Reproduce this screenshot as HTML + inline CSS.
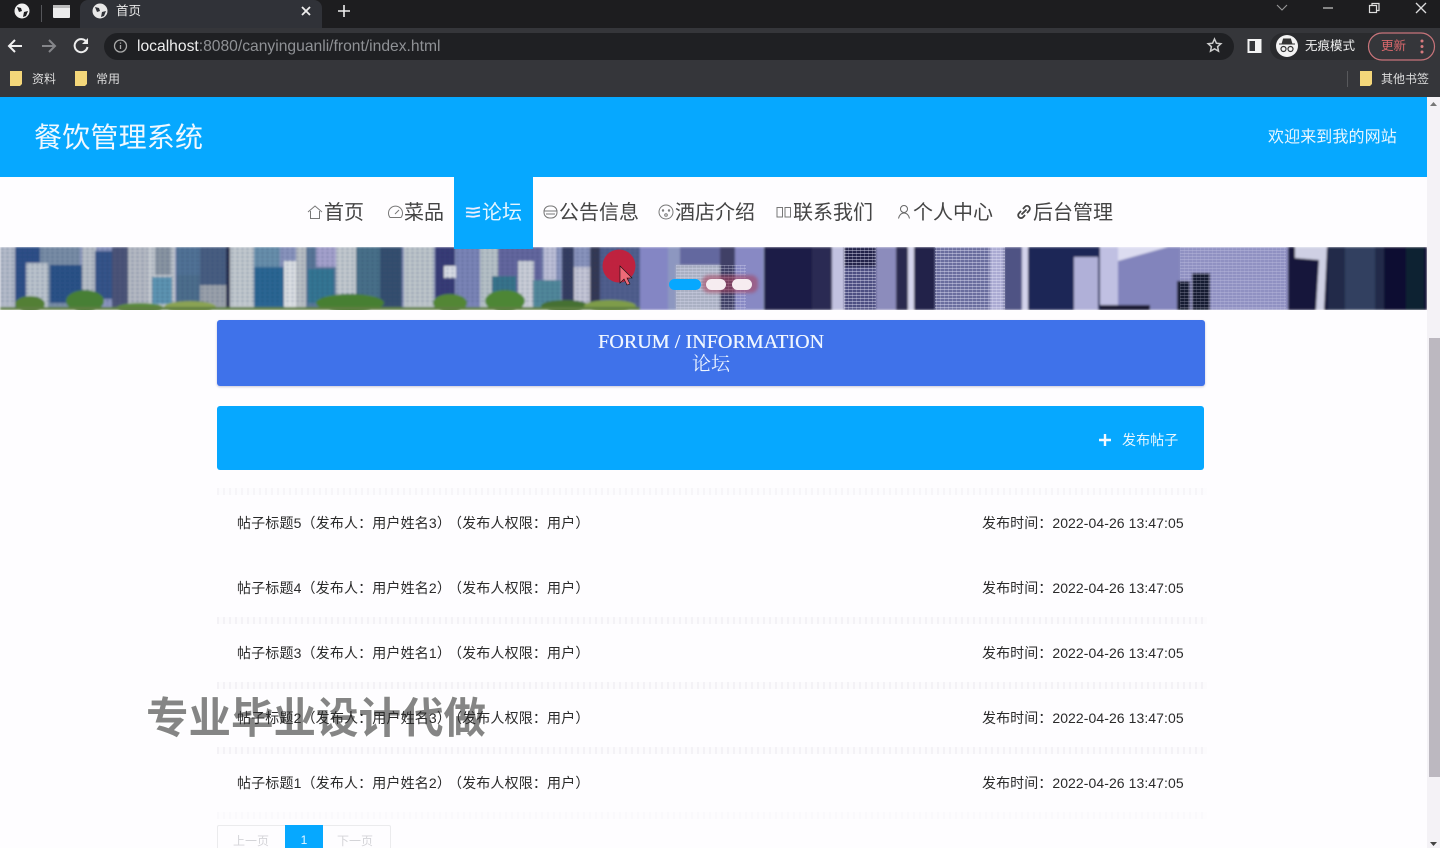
<!DOCTYPE html>
<html lang="zh"><head><meta charset="utf-8"><title>首页</title>
<style>
*{box-sizing:border-box;margin:0;padding:0}
html,body{width:1440px;height:848px;overflow:hidden;background:#fefdff}
body{position:relative;font-family:"Liberation Sans","Noto Sans CJK SC",sans-serif;color:#222}
.a{position:absolute;white-space:nowrap}
.nav{position:absolute;top:198px;font-size:20px;line-height:30px;color:#444;white-space:nowrap}
.nav svg{position:absolute;top:6px;left:-17px}
.rowl,.rowr{position:absolute;font-size:14px;line-height:20px;color:#2a2a2a;white-space:nowrap}
.rowl{left:237px;letter-spacing:.15px}
.rowl span{margin-left:4px}
.rowr{left:982px;letter-spacing:.07px}
.dots{position:absolute;left:217px;width:990px;height:7px;background:repeating-linear-gradient(90deg,rgba(150,140,165,.10) 0 2px,rgba(150,140,165,.02) 2px 6px)}
</style></head><body>

<!-- browser chrome -->
<div class="a" style="left:0;top:0;width:1440px;height:28px;background:#1d1d1f"></div>
<div class="a" style="left:80px;top:0;width:242px;height:30px;background:#303238;border-radius:8px 8px 0 0"></div>
<div class="a" style="left:41px;top:5px;width:1px;height:17px;background:#55565a"></div>
<div class="a" style="left:0;top:28px;width:1440px;height:69px;background:#35363a"></div>
<div class="a" style="left:104px;top:33px;width:1130px;height:27px;border-radius:14px;background:#1f2023"></div>
<svg class="a" style="left:0;top:0" width="360" height="92" fill="none">
<circle cx="22" cy="11" r="7.500" fill="#f0f0f0"/><path d="M17 7l4 1 1 3-3 1zM24 12l4-1-2 5-3 1z" fill="#1d1d1f"/>
<rect x="53" y="5" width="17" height="13" rx="1" fill="#ececec"/><rect x="53" y="5" width="17" height="3" fill="#bbb"/>
<circle cx="100" cy="11" r="7.500" fill="#e8e8e8"/><path d="M95 7l4 1 1 3-3 1zM102 12l4-1-2 5-3 1z" fill="#303238"/>
<path d="M302 7l8 8M310 7l-8 8" stroke="#eee" stroke-width="1.800"/>
<path d="M344 5v12M338 11h12" stroke="#eee" stroke-width="1.600"/>
<path d="M22 46H10M15 40l-6 6 6 6" stroke="#f1f1f1" stroke-width="2"/>
<path d="M42 46h12M49 40l6 6-6 6" stroke="#85868a" stroke-width="2"/>
<path d="M86.500 42a6.500 6.500 0 1 0 1 5" stroke="#eee" stroke-width="2"/><path d="M88 38v6h-6z" fill="#eee"/>
<circle cx="120.500" cy="46" r="6" stroke="#aaa" stroke-width="1.300"/><path d="M120.500 45v4M120.500 42.500v1.200" stroke="#aaa" stroke-width="1.300"/>
<path d="M10 71h12v13l-2 2H10z" fill="#f4d77a"/><path d="M75 71h12v13l-2 2H75z" fill="#f4d77a"/>
</svg>
<div class="a" style="left:116px;top:3px;font-size:12.500px;line-height:16px;color:#e8e8e8">首页</div>
<div class="a" style="left:137px;top:38px;font-size:15.650px;line-height:18px;color:#8f9195"><span style="color:#eee">localhost</span>:8080/canyinguanli/front/index.html</div>
<div class="a" style="left:32px;top:72px;font-size:12px;line-height:15px;color:#ddd">资料</div>
<div class="a" style="left:96px;top:72px;font-size:12px;line-height:15px;color:#ddd">常用</div>
<svg class="a" style="left:1200px;top:0" width="240" height="92" fill="none">
<path d="M77 5l5 5 5-5" stroke="#999" stroke-width="1.100"/>
<path d="M123 8h10" stroke="#ccc" stroke-width="1.200"/>
<rect x="169.500" y="5.500" width="7" height="7" stroke="#ddd" stroke-width="1.200"/><path d="M172 5V3.500h7v7h-2" stroke="#ddd" stroke-width="1.200"/>
<path d="M216 3l10 10M226 3l-10 10" stroke="#ddd" stroke-width="1.300"/>
<path d="M14.500 39l1.900 4.200 4.500.5-3.300 3 .9 4.500-4-2.300-4 2.300.9-4.500-3.300-3 4.500-.5z" stroke="#ccc" stroke-width="1.500"/>
<rect x="48.500" y="40" width="12" height="12" stroke="#f4f4f4" stroke-width="2"/><rect x="55" y="40" width="6" height="12" fill="#f4f4f4"/>
<rect x="70" y="33" width="156" height="27" rx="13" fill="#2a2b2e"/>
<circle cx="87" cy="46" r="11" fill="#f3f3f3"/><path d="M79 44h16M82 44l1.500-5h7l1.500 5z" fill="#333" stroke="#333"/>
<circle cx="83.500" cy="49" r="2.500" stroke="#333" stroke-width="1.200"/><circle cx="90.500" cy="49" r="2.500" stroke="#333" stroke-width="1.200"/>
<rect x="168.500" y="33" width="66" height="27" rx="13.500" fill="#35363a" stroke="#c8747a" stroke-width="1.200"/>
<circle cx="222" cy="41" r="1.500" fill="#d87a7e"/><circle cx="222" cy="46.500" r="1.500" fill="#d87a7e"/><circle cx="222" cy="52" r="1.500" fill="#d87a7e"/>
<path d="M147.500 71v16" stroke="#58595c"/>
<path d="M160 71h12v13l-2 2h-10z" fill="#f4d77a"/>
</svg>
<div class="a" style="left:1305px;top:38px;font-size:12.500px;line-height:16px;color:#f0f0f0">无痕模式</div>
<div class="a" style="left:1381px;top:38px;font-size:12.500px;line-height:16px;color:#d9686c">更新</div>
<div class="a" style="left:1381px;top:72px;font-size:12px;line-height:15px;color:#ddd">其他书签</div>

<!-- header -->
<div class="a" style="left:0;top:97px;width:1427px;height:80px;background:#06a8ff"></div>
<div class="a" style="left:34px;top:119px;font-size:28px;line-height:38px;color:#f0f8ff;letter-spacing:.2px">餐饮管理系统</div>
<div class="a" style="left:1268px;top:127px;font-size:16px;line-height:22px;color:#eaf6ff;letter-spacing:.1px">欢迎来到我的网站</div>

<!-- nav -->
<div class="a" style="left:454px;top:177px;width:79px;height:72px;background:#06a8ff;z-index:2"></div>
<div class="nav" style="left:324px">首页<svg width="16" height="16" viewBox="0 0 16 16" fill="none" stroke="#777"><path d="M1 8l7-6 7 6M3.500 7v7.500h9V7"/></svg></div>
<div class="nav" style="left:404px">菜品<svg width="17" height="16" viewBox="0 0 17 16" fill="none" stroke="#777"><path d="M3 13.500a7 7 0 1 1 11 0zM8 10l4-4"/></svg></div>
<div class="nav" style="left:482px;color:#e3f5ff;z-index:3">论坛<svg width="16" height="16" viewBox="0 0 16 16" fill="none" stroke="#eef" stroke-width="1.800"><path d="M1 4.500c3-1 6 1 9 0l5-1M1 8.500c3-1 6 1 9 0l5-1M1 12.500c3-1 6 1 9 0l5-1"/></svg></div>
<div class="nav" style="left:559px">公告信息<svg width="15" height="16" viewBox="0 0 15 16" fill="none" stroke="#777" style="left:-16px"><rect x="1" y="2" width="13" height="12" rx="5.500"/><path d="M1 7h13M3 10h9"/></svg></div>
<div class="nav" style="left:675px">酒店介绍<svg width="16" height="16" viewBox="0 0 16 16" fill="none" stroke="#777"><circle cx="8" cy="8" r="7"/><circle cx="5" cy="6.500" r=".7"/><circle cx="11" cy="6.500" r=".7"/><circle cx="8" cy="11" r="1.300"/></svg></div>
<div class="nav" style="left:793px">联系我们<svg width="16" height="16" viewBox="0 0 16 16" fill="none" stroke="#777"><rect x="1" y="3.500" width="5.500" height="9.500"/><rect x="9" y="3.500" width="5.500" height="9.500"/></svg></div>
<div class="nav" style="left:913px">个人中心<svg width="16" height="16" viewBox="0 0 16 16" fill="none" stroke="#666"><circle cx="8" cy="5" r="3.500"/><path d="M2.500 14.500c1-4 3-5.500 5.500-5.500s4.500 1.500 5.500 5.500"/></svg></div>
<div class="nav" style="left:1033px">后台管理<svg width="16" height="16" viewBox="0 0 16 16" fill="none" stroke="#444" stroke-width="1.800"><path d="M7 5l2-2.300a2.800 2.800 0 0 1 4 4L11 9M9 11l-2 2.300a2.800 2.800 0 0 1-4-4L5 7M5.500 10.500l5-5"/></svg></div>

<!-- banner -->
<svg class="a" style="left:0;top:247px" width="1427" height="63" viewBox="0 0 1427 63" preserveAspectRatio="none">
<defs><filter id="b" x="0" y="0" width="100%" height="100%"><feGaussianBlur stdDeviation="1"/></filter>
<filter id="c" x="-20%" y="-20%" width="140%" height="140%"><feGaussianBlur stdDeviation="1.500"/></filter>
<pattern id="w" width="5" height="4" patternUnits="userSpaceOnUse"><rect x="1" y="1" width="3" height="2" fill="#1d3460" opacity=".6"/></pattern>
<pattern id="l" width="4" height="3" patternUnits="userSpaceOnUse"><rect width="4" height="1" fill="#e4e4f8" opacity=".45"/><rect width="1" height="3" fill="#e4e4f8" opacity=".25"/></pattern></defs>
<g filter="url(#b)">
<rect width="1427" height="63" fill="#8d97c0"/>
<rect x="0" width="15" height="63" fill="#b9c0cd"/><rect x="15" width="30" height="63" fill="#2e5088"/>
<rect x="40" y="0" width="40" height="63" fill="#7c90a8"/><rect x="26" y="16" width="22" height="45" fill="#c0c8d0"/><rect x="50" y="18" width="32" height="38" fill="#2a5288"/>
<rect x="82" width="14" height="63" fill="#bcc2ca"/><rect x="95" y="4" width="17" height="48" fill="#35558a"/><rect x="112" width="16" height="63" fill="#4e5578"/>
<rect x="128" width="20" height="63" fill="#b9bec6"/><rect x="148" width="27" height="63" fill="#c9ced3"/><rect x="152" y="30" width="20" height="27" fill="#5f97b4"/><rect x="155" y="0" width="16" height="28" fill="#8d98a4"/>
<rect x="176" y="0" width="24" height="63" fill="#527497"/><rect x="176" y="28" width="24" height="35" fill="#4f6f8e"/><rect x="200" y="38" width="26" height="25" fill="#9fa5ad"/><rect x="200" y="0" width="26" height="38" fill="#4a5f82"/>
<rect x="226" width="4" height="63" fill="#202846"/><rect x="230" width="24" height="63" fill="#c7ced2"/><rect x="254" y="20" width="30" height="43" fill="#2a6894"/><rect x="254" y="0" width="26" height="20" fill="#6b92ad"/>
<rect x="284" y="14" width="16" height="49" fill="#e2e5e8"/><rect x="296" width="10" height="63" fill="#bec3c7"/><rect x="306" width="30" height="63" fill="#5a7899"/><rect x="316" width="20" height="20" fill="#a9a5d0"/>
<rect x="308" y="22" width="26" height="34" fill="#347894"/><rect x="336" width="20" height="63" fill="#c8ced2"/><rect x="356" width="30" height="63" fill="#48728a"/><rect x="380" y="0" width="22" height="63" fill="#36506e"/>
<rect x="404" width="30" height="63" fill="#c2cace"/><rect x="435" width="20" height="63" fill="#383a76"/><rect x="444" y="19" width="24" height="12" fill="#e0e3ea"/><rect x="456" width="24" height="63" fill="#7e87ba"/>
<rect x="480" width="18" height="63" fill="#bcc6ca"/><rect x="498" width="44" height="63" fill="#6669a0"/><rect x="518" y="14" width="16" height="49" fill="#cfd3db"/><rect x="492" y="29" width="24" height="25" fill="#38768c"/>
<rect x="544" width="12" height="63" fill="#c3c5dc"/><rect x="533" y="33" width="28" height="30" fill="#528b9c"/><rect x="562" width="12" height="63" fill="#343c60"/><rect x="574" y="20" width="20" height="43" fill="#cbcbda"/>
<rect x="590" width="10" height="63" fill="#343852"/><rect x="600" width="40" height="63" fill="#52608f"/><rect x="640" width="28" height="63" fill="#8486c4"/><rect x="680" width="40" height="63" fill="#64679f"/>
<rect x="676" y="18" width="70" height="45" fill="#aab0c3"/><rect x="720" width="38" height="63" fill="#3f4166"/><rect x="735" width="28" height="63" fill="#8889c4"/>
<rect x="764" width="68" height="63" fill="#1b1c46"/><rect x="812" width="20" height="63" fill="#2a2b52"/><rect x="832" width="12" height="63" fill="#c2c2e0"/><rect x="844" y="20" width="32" height="43" fill="#4e5082"/>
<rect x="844" width="32" height="20" fill="#22224a"/><rect x="876" width="20" height="63" fill="#8c8cbc"/><rect x="896" width="12" height="63" fill="#2a2a50"/><rect x="908" width="6" height="63" fill="#d5d5ec"/>
<rect x="914" width="21" height="63" fill="#20214a"/><rect x="935" width="55" height="63" fill="#6a6d9e"/><rect x="990" width="14" height="63" fill="#aaaad2"/><rect x="1004" width="18" height="63" fill="#505284"/><rect x="1022" width="6" height="63" fill="#d2d2ea"/>
<rect x="1028" width="110" height="63" fill="#1e2756"/><rect x="1074" y="10" width="24" height="53" fill="#b0b0d8"/><rect x="1100" y="0" width="18" height="63" fill="#c0c0e2"/>
<rect x="1118" y="0" width="170" height="63" fill="#8284bc"/><path d="M1118 14l50-14h-50z" fill="#dcdcf0"/><rect x="1180" y="0" width="108" height="63" fill="#9091c2"/>
<rect x="1177" y="34" width="13" height="29" fill="#161a30"/><rect x="1192" y="26" width="18" height="37" fill="#161a30"/><rect x="1100" y="58" width="50" height="5" fill="#141830"/>
<rect x="1288" width="76" height="63" fill="#14183a"/><path d="M1295 0l32 0-3 63h-8l3-50-24-2z" fill="#cfd0e4"/>
<rect x="1328" width="56" height="63" fill="#222c48"/><rect x="1345" width="30" height="63" fill="#354668" opacity=".8"/><rect x="1384" width="43" height="63" fill="#0a1130"/><rect x="1406" width="18" height="63" fill="#0c2233"/>
<rect x="0" width="640" height="58" fill="url(#w)" opacity=".55"/>
<ellipse cx="30" cy="57" rx="15" ry="8" fill="#527f35"/><ellipse cx="85" cy="54" rx="19" ry="11" fill="#477f34"/><ellipse cx="140" cy="61" rx="24" ry="5" fill="#5c8a3c"/><ellipse cx="190" cy="60" rx="26" ry="6" fill="#8aa352"/>
<ellipse cx="350" cy="56" rx="34" ry="9" fill="#477f32"/><ellipse cx="450" cy="56" rx="17" ry="9" fill="#528634"/><ellipse cx="505" cy="54" rx="20" ry="11" fill="#4e8636"/><ellipse cx="565" cy="59" rx="24" ry="6" fill="#456f33"/><ellipse cx="610" cy="59" rx="26" ry="6" fill="#7e9c48"/>
<rect x="0" y="60" width="640" height="3" fill="#5f7e42"/>
</g>
<rect x="844" width="32" height="63" fill="url(#l)"/><rect x="935" width="70" height="63" fill="url(#l)"/><rect x="1180" width="106" height="63" fill="url(#l)" opacity=".5"/><rect x="676" y="18" width="70" height="45" fill="url(#l)" opacity=".7"/>
<rect x="702" y="28" width="56" height="18" rx="7" fill="#a8405c" opacity=".55" filter="url(#c)"/>
<rect x="669" y="32" width="32" height="11" rx="5.500" fill="#06a8ff"/><rect x="706" y="32" width="20" height="11" rx="5.500" fill="#f6ecf0"/><rect x="732" y="32" width="20" height="11" rx="5.500" fill="#f6ecf0"/>
<circle cx="619" cy="19" r="16.500" fill="#cf1a34" opacity=".88"/>
<path d="M620 19v17l4-4 3 6 3-1-3-6h5z" fill="#ee6a78" stroke="#111" stroke-width=".6"/>
</svg>

<!-- title bars -->
<div class="a" style="left:217px;top:320px;width:988px;height:66px;background:#3f72ea;border-radius:3px;box-shadow:0 1px 2px rgba(100,100,140,.35)"></div>
<div class="a" style="left:217px;top:331px;width:988px;text-align:center;font-family:'Liberation Serif','Noto Serif CJK SC',serif;font-size:20px;line-height:22px;color:#eef5ff;letter-spacing:.08px;text-shadow:.3px 0 0 #eef5ff">FORUM / INFORMATION</div>
<div class="a" style="left:217px;top:353px;width:988px;text-align:center;font-family:'Liberation Serif','Noto Serif CJK SC',serif;font-size:19px;line-height:23px;color:#eef5ff">论坛</div>
<div class="a" style="left:217px;top:406px;width:987px;height:64px;background:#06a8ff;border-radius:3px"></div>
<svg class="a" style="left:1098px;top:433px" width="14" height="14"><path d="M7 1v12M1 7h12" stroke="#f2f9ff" stroke-width="2.400"/></svg>
<div class="a" style="left:1122px;top:431px;font-size:14px;line-height:18px;color:#e6f6ff;letter-spacing:.1px">发布帖子</div>

<!-- watermark (under the list text) -->
<div class="a" style="left:146px;top:695px;font-size:42.500px;line-height:50px;font-weight:bold;color:#858585;text-shadow:1px 1px 0 #fff,-1px -1px 0 #fff,1px -1px 0 #fff,-1px 1px 0 #fff">专业毕业设计代做</div>

<!-- list -->
<div class="dots" style="top:488px;opacity:.7"></div>
<div class="dots" style="top:617px"></div>
<div class="dots" style="top:682px"></div>
<div class="dots" style="top:747px"></div>
<div class="dots" style="top:812px;opacity:.35"></div>
<div class="rowl" style="top:513px">帖子标题5（发布人：用户姓名3）<span>（发布人权限：用户）</span></div><div class="rowr" style="top:513px">发布时间：2022-04-26 13:47:05</div>
<div class="rowl" style="top:578px">帖子标题4（发布人：用户姓名2）<span>（发布人权限：用户）</span></div><div class="rowr" style="top:578px">发布时间：2022-04-26 13:47:05</div>
<div class="rowl" style="top:643px">帖子标题3（发布人：用户姓名1）<span>（发布人权限：用户）</span></div><div class="rowr" style="top:643px">发布时间：2022-04-26 13:47:05</div>
<div class="rowl" style="top:708px">帖子标题2（发布人：用户姓名3）<span>（发布人权限：用户）</span></div><div class="rowr" style="top:708px">发布时间：2022-04-26 13:47:05</div>
<div class="rowl" style="top:773px">帖子标题1（发布人：用户姓名2）<span>（发布人权限：用户）</span></div><div class="rowr" style="top:773px">发布时间：2022-04-26 13:47:05</div>

<!-- pagination -->
<div class="a" style="left:217px;top:825px;width:174px;height:30px;border:1px solid #ebebed;border-radius:2px"></div>
<div class="a" style="left:233px;top:833px;font-size:12px;line-height:16px;color:#d4d4d8">上一页</div>
<div class="a" style="left:285px;top:825px;width:38px;height:30px;background:#06a8ff;text-align:center;font-size:12px;line-height:30px;color:#e8f7ff">1</div>
<div class="a" style="left:337px;top:833px;font-size:12px;line-height:16px;color:#d4d4d8">下一页</div>

<!-- scrollbar -->
<div class="a" style="left:1427px;top:97px;width:13px;height:751px;background:#f4f2f6"></div>
<div class="a" style="left:1429px;top:338px;width:11px;height:439px;background:#bcb8c0"></div>
<svg class="a" style="left:1427px;top:97px" width="13" height="751"><path d="M3 9l3.500-4 3.500 4z" fill="#777"/><path d="M3 745h7l-3.500 4z" fill="#444"/></svg>
</body></html>
